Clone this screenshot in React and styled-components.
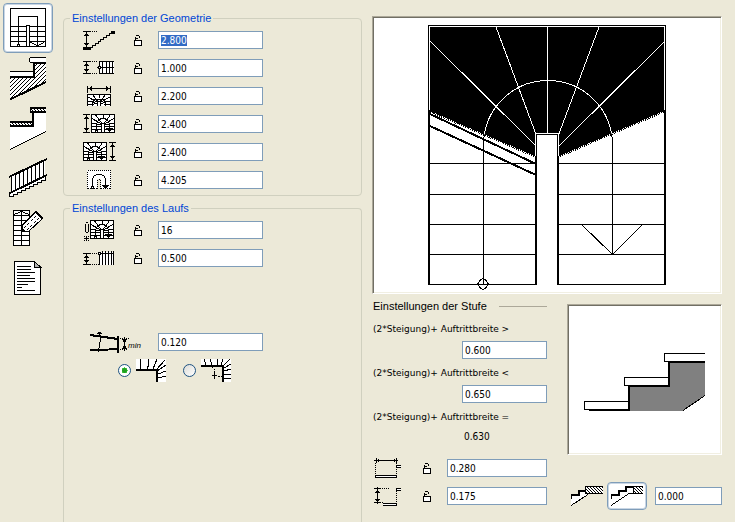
import React, { useEffect, useRef } from 'react';
import styled, { createGlobalStyle } from 'styled-components';

const GlobalStyle = createGlobalStyle`
  * {
    box-sizing: border-box;
  }
  body {
    margin: 0;
    background: #ece9d8;
    color: #000;
    font-family: 'DejaVu Sans Condensed', 'DejaVu Sans', sans-serif;
    font-stretch: condensed;
    font-size: 10px;
    line-height: 14px;
  }
  ::selection {
    background: rgba(49, 106, 197, 0.996);
    color: #fff;
  }
`

const Page = styled.div`
  display: grid;
  grid-template-columns: 63px 299px minmax(350px, 1fr);
  min-height: 100vh;
  padding-right: 13px;
`

const Toolbar = styled.nav`
  display: flex;
  flex-direction: column;
  padding: 3px;
`

const ToolButton = styled.button`
  display: flex;
  align-items: center;
  justify-content: center;
  width: ${props => props.$small ? '40px' : '50px'};
  height: ${props => props.$small ? '28px' : '50px'};
  padding: 0;
  border: 1px solid ${props => props.$active ? '#7f9db9' : 'transparent'};
  border-radius: 4px;
  background: ${props => props.$active ? '#fff' : 'transparent'};
  box-shadow: ${props => props.$active ? 'inset 0 0 0 1px #c9d6e4' : 'none'};
`

const Drawing = styled.svg`
  display: block;
  flex: none;
  fill: none;
  stroke: #000;
  stroke-width: 1;
  shape-rendering: crispEdges;
`

const Settings = styled.main`
  display: flex;
  flex-direction: column;
  gap: 5px;
  padding-top: 11px;
`

const Group = styled.fieldset`
  min-width: 0;
  margin: 0;
  padding: 1px 8px;
  border: 1px solid #d0d0bf;
  border-radius: 4px;
  ${props => props.$open && `
    flex: 1;
    border-bottom: 0;
    border-radius: 4px 4px 0 0;
  `}
`

const GroupTitle = styled.legend`
  height: 14px;
  margin-left: -2px;
  padding: 0 2px;
  color: #0046d5;
  font-family: 'Liberation Sans', sans-serif;
  font-stretch: normal;
  font-size: 11px;
`

const Row = styled.div`
  display: grid;
  grid-template-columns: ${props => props.$step ? '43px' : '54px'} 24px auto;
  align-items: center;
  justify-content: start;
  height: 28px;
  margin-top: ${props => props.$apart ? '56px' : '0'};
`

const RowIcon = styled.label`
  display: flex;
  justify-content: ${props => props.$align || 'center'};
  grid-column: span ${props => props.$wide ? 2 : 1};
  padding: 0 ${props => props.$wide ? '6px' : '0'};
`

const LockButton = styled.button`
  display: flex;
  justify-content: center;
  padding: 0;
  border: 0;
  background: none;
`

const NumberInput = styled.input`
  width: ${props => props.$width || 105}px;
  height: 18px;
  margin-left: ${props => props.$inset ? '8px' : '0'};
  padding: 0 2px;
  border: 1px solid #7f9db9;
  border-radius: 0;
  outline: none;
  background: #fff;
  color: #000;
  font: inherit;
`

const RadioRow = styled.div`
  display: flex;
  align-items: center;
  gap: 17px;
  height: 28px;
  padding-left: 46px;
`

const RadioOption = styled.label`
  display: flex;
  align-items: center;
  gap: 5px;
`

const Radio = styled.input`
  appearance: none;
  width: 13px;
  height: 13px;
  margin: 0;
  border: 1px solid #1d5281;
  border-radius: 50%;
  background: linear-gradient(135deg, #dcdcd7, #fff);
  &:checked {
    background: radial-gradient(circle, #21a121 0 2px, #55d551 3px, #fff 3px);
  }
`

const Preview = styled.aside`
  display: flex;
  flex-direction: column;
  gap: 1px;
  padding: 16px 0 12px 10px;
`

const Canvas = styled.div`
  display: flex;
  align-items: center;
  justify-content: center;
  height: ${props => props.$height}px;
  border: 1px solid;
  border-color: #aca899 #fff #fff #aca899;
  background: #fff;
  box-shadow: inset 1px 1px #716f64, inset -1px -1px #f1efe2;
`

const StepArea = styled.div`
  display: grid;
  grid-template-columns: 175px 1fr;
  gap: 20px;
`

const StepTitle = styled.h2`
  display: flex;
  align-items: center;
  gap: 12px;
  height: 22px;
  margin: 0;
  padding-left: 1px;
  font-family: 'Liberation Sans', sans-serif;
  font-stretch: normal;
  font-size: 11px;
  font-weight: normal;
  white-space: nowrap;
  &::after {
    content: '';
    flex: 1;
    height: 1px;
    background: #aca899;
  }
`

const StepLabel = styled.label`
  display: block;
  height: 22px;
  padding-left: 1px;
  font-family: 'DejaVu Sans', sans-serif;
  font-stretch: normal;
  font-size: 9px;
  line-height: 24px;
  white-space: nowrap;
`

const StepValue = styled.div`
  display: flex;
  align-items: center;
  justify-content: flex-end;
  height: 22px;
`

const StepResult = styled.output`
  display: block;
  height: 20px;
  margin-bottom: 7px;
  padding-left: 92px;
  line-height: 20px;
`

const StepPreview = styled.section`
  display: flex;
  flex-direction: column;
  justify-content: space-between;
  padding-top: 9px;
`

const Footer = styled.div`
  display: flex;
  align-items: center;
  justify-content: space-between;
  height: 28px;
`

const ExitButtons = styled.div`
  display: flex;
`

/* ---- toolbar drawings ---- */

const PlanIcon = () => (
  <Drawing width="36" height="40" viewBox="0 0 36 40">
    <path d="M.5 .5H35.5V38.5H.5ZM8.5 38V8.5H27.5V37" />
    <path d="M0 18.5H16M0 23.5H16M0 28.5H16M0 33.5H16M20 18.5H36M20 23.5H36M20 28.5H36M20 33.5H36" />
    <path d="M16.5 38V17.5H19.5V38" fill="#fff" />
    <path d="M20.5 34.5L27.5 37.5L34.5 34.5" />
    <rect x="7.5" y="36.5" width="2" height="2" fill="#fff" />
  </Drawing>
)

const SolidStairIcon = () => (
  <Drawing width="38" height="45" viewBox="9 55 38 45">
    <defs>
      <pattern id="hatch" width="4" height="4" patternUnits="userSpaceOnUse">
        <rect width="4" height="4" fill="#fff" stroke="none" />
        <path d="M3 0h1v1h-1zM2 1h1v1h-1zM1 2h1v1h-1zM0 3h1v1h-1z" fill="#000" stroke="none" />
      </pattern>
    </defs>
    <path d="M10 77H34V63H46V81L10 99Z" fill="url(#hatch)" stroke="none" />
    <path d="M46 56.5H30.5L29.5 57.5V60.5L30.5 61.5H46" fill="#fff" />
    <path d="M10 70.5H33V75H10" fill="#fff" />
    <path d="M10 76H34V62H46" strokeWidth="2" />
    <path d="M10 98.5L46 81" strokeWidth="2" />
  </Drawing>
)

const CoveredStairIcon = () => (
  <Drawing width="38" height="45" viewBox="9 106 38 45">
    <defs>
      <pattern id="tread" width="3" height="3" patternUnits="userSpaceOnUse">
        <rect width="3" height="3" fill="#fff" stroke="none" />
        <path d="M0 0h1v1h-1zM1 1h1v1h-1zM2 2h1v1h-1z" fill="#000" stroke="none" />
      </pattern>
    </defs>
    <path d="M10 127H33V113H46V132L10 149Z" fill="#fff" stroke="none" />
    <path d="M46 107.5H30.5V111H46" fill="url(#tread)" />
    <path d="M46 108H30V112H46" />
    <path d="M10 121.5H33V126H10" fill="url(#tread)" />
    <path d="M10 126H33V112H46M10 122H32" strokeWidth="2" />
    <path d="M10 149.5L46 131.5" />
  </Drawing>
)

const RailingIcon = () => (
  <Drawing width="38" height="42" viewBox="9 157 38 42">
    <path d="M11 177L45 160V176L11 192Z" fill="#fff" stroke="none" />
    <path d="M9 194V196.5H13.5V194.5H17.5V192.5H21.5V190.5H25.5V188.5H29.5V186.5H33.5V184.5H37.5V182.5H41.5V180.5H45.5V177" fill="#fff" />
    <path d="M9 177L47 159M9 193.5L47 175" strokeWidth="2" />
    <path d="M11.5 176V192M15.5 174V190M19.5 172V188M23.5 170V186M27.5 168V184M31.5 166V182M35.5 164V180M39.5 162V179M43.5 160V177" />
  </Drawing>
)

const EditStairIcon = () => (
  <Drawing width="31" height="38" viewBox="14 208 31 38">
    <path d="M14.5 209.5H30.5V244.5H14.5Z" fill="#fff" />
    <path d="M22.5 209V245M14 214.5H31M14 219.5H31M14 224.5H31M14 229.5H31M14 234.5H31M14 239.5H31M15 213.5L22.5 210.5L30 213.5" />
    <path d="M23 224.5L37 210.5L43.5 217.5L29.5 230.5H23Z" fill="#fff" />
    <path d="M25 227L39 213M28 229L41 216" strokeDasharray="1 1" />
    <path d="M23 227V230H26Z" fill="#000" />
    <path d="M36.5 210.5L43.5 217.5" strokeWidth="2" />
  </Drawing>
)

const DocumentIcon = () => (
  <Drawing width="28" height="36" viewBox="14 260 28 36">
    <path d="M14.5 261.5H34.5L40.5 267.5V294.5H14.5Z" fill="#fff" />
    <path d="M34.5 261V267.5H41L34.5 261.5" fill="#b4b4b4" />
    <path d="M17 266.5H31M17 269.5H31M17 272.5H35M17 275.5H30M17 278.5H35M17 281.5H35M17 284.5H28M17 287.5H22M17 290.5H35" />
  </Drawing>
)

/* ---- row drawings ---- */

const LockIcon = () => (
  <Drawing width="8" height="11" viewBox="0 0 8 11">
    <path d="M.5 5.5H7.5V10.5H.5Z" fill="#fff" />
    <path d="M1.5 5V1.5M2 .5H5M5.5 1V3M1 3.5H4" />
  </Drawing>
)

const VerticalSize = ({ x, top, bottom }) => (
  <g>
    <path d={`M${x - 3} ${top + .5}H${x + 4}M${x - 3} ${bottom + .5}H${x + 4}M${x + .5} ${top}V${bottom}`} />
    <path
      d={`M${x - 1} ${top + 3}h3v1h-3zM${x - 2} ${top + 4}h5v1h-5zM${x - 1} ${bottom - 3}h3v1h-3zM${x - 2} ${bottom - 4}h5v1h-5z`}
      fill="#000"
      stroke="none"
    />
  </g>
)

const WindingStair = ({ x }) => (
  <g transform={`translate(${x} 2)`}>
    <rect x=".5" y=".5" width="23" height="18" fill="#fff" />
    <path d="M10.5 19V9.5H13.5V19" />
    <path d="M0 9.5H3L10 11M24 9.5H21L14 11M0 4L10 9.5M24 4L14 9.5M4 0L10.5 9M20 0L13.5 9M12 0V5" />
    <path d="M0 12.5H10M0 15.5H10M14 12.5H24M14 15.5H24" />
    <path d="M5.5 18V9.5L7.5 6.5L10 4.5H14L16.5 6.5L18.5 9.5V15" />
    <path d="M15 14H22L18.5 18Z" fill="#000" stroke="none" />
    <rect x="4.5" y="16.5" width="2" height="2" fill="#fff" />
  </g>
)

const HeightIcon = () => (
  <Drawing width="36" height="24" viewBox="0 0 36 24">
    <VerticalSize x={5} top={3} bottom={19} />
    <path d="M9 3.5H17" strokeDasharray="1 1" />
    <path d="M2 19h8v3h-8zM30 3h4v3h-4z" fill="#000" stroke="none" />
    <path d="M9 19.5H11.5V17.5H14.5V15.5H17.5V13.5H19.5V11.5H22.5V9.5H25.5V7.5H28.5V5.5H31" />
  </Drawing>
)

const WidthIcon = () => (
  <Drawing width="36" height="24" viewBox="0 0 36 24">
    <VerticalSize x={5} top={5} bottom={17} />
    <path d="M9 5.5H17M9 17.5H17" strokeDasharray="1 1" />
    <path d="M18 5H33V18H18Z" fill="#fff" stroke="none" />
    <path d="M18 5.5H33M18 17.5H33M16 11.5H33M18.5 5V18M21.5 5V18M25.5 5V18M28.5 5V18M31.5 5V18" />
    <rect x="17.5" y="10.5" width="2" height="2" fill="#fff" />
  </Drawing>
)

const TotalWidthIcon = () => (
  <Drawing width="36" height="24" viewBox="0 0 36 24">
    <path d="M6 4.5H30M6.5 2V8M29.5 2V8" />
    <path d="M8 4h1v1h-1zM9 3h1v3h-1zM10 2h1v5h-1zM27 4h1v1h-1zM26 3h1v3h-1zM25 2h1v5h-1z" fill="#000" stroke="none" />
    <path d="M6.5 8V11M29.5 8V11" strokeDasharray="1 1" />
    <path d="M6 10H30V22H6Z" fill="#fff" stroke="none" />
    <path d="M6.5 22V10.5H29.5V22M16.5 22V17.5H19.5V22" />
    <path d="M7 13L16 18M29 13L20 18M11 10L16.5 17M25 10L19.5 17M18 10V14M6 17.5H10L16 20M30 17.5H26L20 20M7 20.5H13M23 20.5H29M11.5 22V18L14 15H22L24.5 18V22" />
  </Drawing>
)

const LeftLengthIcon = () => (
  <Drawing width="36" height="24" viewBox="0 0 36 24">
    <VerticalSize x={5} top={2} bottom={20} />
    <WindingStair x={10} />
  </Drawing>
)

const RightLengthIcon = () => (
  <Drawing width="36" height="24" viewBox="0 0 36 24">
    <WindingStair x={2} />
    <VerticalSize x={31} top={2} bottom={20} />
  </Drawing>
)

const WalkLineIcon = () => (
  <Drawing width="36" height="24" viewBox="0 0 36 24">
    <path d="M6 2H30V21H20V11H16V21H6Z" fill="#fff" stroke="none" />
    <path d="M6.5 20.5V2.5H29.5V20.5M19.5 20.5V11.5H16.5V20.5M6.5 20.5H16M20 20.5H29.5" strokeDasharray="1 1" />
    <path d="M11.5 19V11.5L12.5 8.5L15.5 6.5H20.5L23.5 8.5L24.5 11.5V18" />
    <path d="M21 17H28L24.5 21Z" fill="#000" stroke="none" />
    <rect x="10.5" y="18.5" width="2" height="2" fill="#fff" />
  </Drawing>
)

const StepCountIcon = () => (
  <Drawing width="36" height="24" viewBox="0 0 36 24">
    <path d="M5 4.5H7M4.5 6V14M7.5 6V14M5 14.5H7" />
    <path d="M5.5 18V23M3 20.5H8" />
    <path d="M3 18h1v1h-1zM7 18h1v1h-1zM3 22h1v1h-1zM7 22h1v1h-1z" fill="#000" stroke="none" />
    <WindingStair x={9} />
  </Drawing>
)

const OffsetIcon = () => (
  <Drawing width="36" height="24" viewBox="0 0 36 24">
    <VerticalSize x={5} top={7} bottom={18} />
    <path d="M9 7.5H17M9 18.5H18" strokeDasharray="1 1" />
    <path d="M19 6H33V19H19Z" fill="#fff" stroke="none" />
    <path d="M18 7.5H33M18.5 7V19M21.5 5V19M24.5 5V19M27.5 5V19M30.5 5V19M32.5 5V19" />
    <rect x="17.5" y="6.5" width="2" height="2" fill="#fff" />
  </Drawing>
)

const MinTreadText = styled.text`
  fill: #000;
  stroke: none;
  font-family: 'Liberation Sans', sans-serif;
  font-size: 8px;
  font-style: italic;
`

const MinTreadIcon = () => (
  <Drawing width="54" height="24" viewBox="0 0 54 24">
    <path d="M0 5L28 9M0 20.5L28 19" strokeWidth="2" />
    <path d="M28 6V23" strokeWidth="2" />
    <path d="M9.5 2L10.5 9L9.5 16L8 22M7 3.5H12M8 2.5H11" />
    <path d="M30 8.5H40M30 19.5H38" strokeDasharray="1 1" />
    <path d="M34.5 7V21M32 9.5H37M32 18.5H37" />
    <path d="M33 10h3v2h-3zM33 16h3v2h-3z" fill="#000" stroke="none" />
    <MinTreadText x="38" y="18">min</MinTreadText>
  </Drawing>
)

const CornerFanIcon = () => (
  <Drawing width="30" height="23" viewBox="0 0 30 23">
    <path d="M0 0H30V23H20V11H0Z" fill="#fff" stroke="none" />
    <path d="M0 11H21V23" strokeWidth="2" />
    <path d="M4 0L5 10M12.5 0V5L11.5 10M21 0L17 10M29 1L20 11M30 6L21 12M30 12L22 15M30 17L22 19" />
  </Drawing>
)

const PointFanIcon = () => (
  <Drawing width="30" height="23" viewBox="0 0 30 23">
    <path d="M0 0H30V23H21V7H0Z" fill="#fff" stroke="none" />
    <path d="M0 7H22V23" strokeWidth="2" />
    <path d="M3 0L5 6M9 0L11 6M16 0V6M22 0L20 6M29 0L22 7M30 5L23 9M30 10L23 12M30 15L23 16M30 19H23" />
    <path d="M11 7L13.5 11V20M17 17.5H21" strokeDasharray="2 1" />
    <path d="M11 16.5H16M13.5 14V19" />
  </Drawing>
)

const TreadDepthIcon = () => (
  <Drawing width="30" height="24" viewBox="0 0 30 24">
    <path d="M2 4.5H26M4.5 2V7M24.5 2V7" />
    <path d="M5 4h1v1h-1zM6 3h1v3h-1zM23 4h1v1h-1zM22 3h1v3h-1z" fill="#000" stroke="none" />
    <path d="M3.5 7V18M24.5 7V19" strokeDasharray="1 1" />
    <path d="M3.5 19.5H24.5V21.5H3.5Z" fill="#fff" />
    <path d="M29 9.5H24.5V11.5H29" fill="#fff" />
  </Drawing>
)

const RiserHeightIcon = () => (
  <Drawing width="30" height="24" viewBox="0 0 30 24">
    <path d="M2 4.5H8M2 18.5H8M5.5 3V20" />
    <path d="M4 7h3v1h-3zM3 8h5v1h-5zM4 16h3v1h-3zM3 15h5v1h-5z" fill="#000" stroke="none" />
    <path d="M8 4.5H18M8 18.5H12M24.5 7V19" strokeDasharray="1 1" />
    <path d="M11 19.5H24.5V21.5H11" fill="#fff" />
    <path d="M29 4.5H24.5V6.5H29" fill="#fff" />
  </Drawing>
)

const FloorHatch = ({ id }) => (
  <defs>
    <pattern id={id} width="3" height="3" patternUnits="userSpaceOnUse">
      <rect width="3" height="3" fill="#fff" stroke="none" />
      <path d="M0 0h1v1h-1zM1 1h1v1h-1zM2 2h1v1h-1z" fill="#000" stroke="none" />
    </pattern>
  </defs>
)

const ExitBelowIcon = () => (
  <Drawing width="32" height="20" viewBox="0 0 32 20">
    <FloorHatch id="floor-below" />
    <path d="M0 9H7V5H14V8H17L0 19Z" fill="#fff" stroke="none" />
    <path d="M0 9H7.5V5H14" strokeWidth="2" />
    <path d="M.5 9V13M0 19.5L17 8.5" />
    <path d="M32 .5H14.5V7.5H32" fill="url(#floor-below)" />
  </Drawing>
)

const ExitFlushIcon = () => (
  <Drawing width="32" height="20" viewBox="0 0 32 20">
    <FloorHatch id="floor-flush" />
    <path d="M0 9H7.5V5H14.5V1H24" strokeWidth="2" />
    <path d="M.5 9V13M0 19.5L18 7.5H23" />
    <path d="M32 .5H22.5V7.5H32" fill="url(#floor-flush)" />
  </Drawing>
)

/* ---- large drawings ---- */

const turnOutline = 'M430 27H664V111L559 156V133H535V156L430 111Z'
const walkLine = 'M483.5 284V145A64.5 64.5 0 0 1 612.5 145V254'

const PlanDrawing = () => (
  <Drawing width="240" height="270" viewBox="427 20 240 270" role="img" aria-label="Grundriss">
    <defs>
      <clipPath id="turn">
        <path d={turnOutline} />
      </clipPath>
    </defs>
    <path d="M428.5 285V25.5H665.5V285" />
    <path d="M429 110V285M536 155V285M558 155V285M665 110V285" strokeWidth="2" />
    <path d={turnOutline} fill="#000" stroke="none" />
    <path d="M430 111.5L535 156.5M664 111.5L559 156.5" strokeDasharray="1 1" strokeWidth="2" />
    <path d="M430 163.5H536M430 194.5H536M430 224.5H536M430 254.5H536M428 284.5H537" />
    <path d="M558 163.5H664M558 194.5H664M558 224.5H664M558 254.5H664M557 284.5H666" />
    <path d="M430 114L536 164M430 126L536 175" strokeWidth="2" />
    <path d={walkLine} />
    <path d="M582 225L612.5 254.5L642 225" />
    <g stroke="#fff" clipPath="url(#turn)">
      <path d={walkLine} />
      <path d="M430 41L535 145M496 27L535.5 133M547.5 27V133M599 27L558.5 135M664 42L559 146" />
    </g>
    <path d="M535.5 156V133.5H558.5V156M429.5 110V26.5H664.5V110" stroke="#fff" />
    <path d="M536.5 156V134.5H557.5V156" />
    <path d="M480.5 279.5L483 278.5L485.5 279.5L486.5 281.5L488.5 284L486.5 286.5L485.5 288.5L483 289.5L480.5 288.5L479.5 286.5L477.5 284L479.5 281.5Z" />
  </Drawing>
)

const StepDrawing = () => (
  <Drawing width="151" height="147" viewBox="569 306 151 147" role="img" aria-label="Stufen">
    <path d="M629 386H669V362H705V395L682 411H629Z" fill="#808080" stroke="none" />
    <path d="M584.5 401.5H628.5V409.5H584.5ZM624.5 377.5H668.5V385.5H624.5ZM705 353.5H664.5V361.5H705" fill="#fff" />
    <path d="M589 410H629V386H669V362H705" strokeWidth="2" />
    <path d="M683 410.5L705 395.5" />
  </Drawing>
)

/* ---- panels ---- */

const ValueRow = ({ id, label, icon, value, locked = true, apart, inputRef }) => (
  <Row $apart={apart}>
    <RowIcon htmlFor={id} aria-label={label} $wide={!locked} $align={locked ? 'center' : 'flex-end'}>{icon}</RowIcon>
    {locked && <LockButton type="button" aria-label={`${label} sperren`}><LockIcon /></LockButton>}
    <NumberInput id={id} ref={inputRef} defaultValue={value} $inset />
  </Row>
)

const StepRow = ({ id, label, icon, value }) => (
  <Row $step>
    <RowIcon htmlFor={id} aria-label={label} $align="flex-start">{icon}</RowIcon>
    <LockButton type="button" aria-label={`${label} sperren`}><LockIcon /></LockButton>
    <NumberInput id={id} defaultValue={value} $width={100} $inset />
  </Row>
)

const tools = [
  { name: 'Grundriss', icon: <PlanIcon /> },
  { name: 'Massivtreppe', icon: <SolidStairIcon /> },
  { name: 'Belag', icon: <CoveredStairIcon /> },
  { name: 'Geländer', icon: <RailingIcon /> },
  { name: 'Darstellung', icon: <EditStairIcon /> },
  { name: 'Attribute', icon: <DocumentIcon /> },
]

const geometry = [
  { id: 'height', label: 'Höhe', icon: <HeightIcon />, value: '2.800' },
  { id: 'width', label: 'Laufbreite', icon: <WidthIcon />, value: '1.000' },
  { id: 'total', label: 'Gesamtbreite', icon: <TotalWidthIcon />, value: '2.200' },
  { id: 'left', label: 'Länge links', icon: <LeftLengthIcon />, value: '2.400' },
  { id: 'right', label: 'Länge rechts', icon: <RightLengthIcon />, value: '2.400' },
  { id: 'line', label: 'Lauflinie', icon: <WalkLineIcon />, value: '4.205' },
]

const App = () => {
  const firstInput = useRef(null)

  useEffect(() => {
    firstInput.current.focus()
    firstInput.current.select()
  }, [])

  return (
    <Page>
      <GlobalStyle />
      <Toolbar>
        {tools.map((tool, i) => (
          <ToolButton key={tool.name} type="button" aria-label={tool.name} $active={i === 0}>{tool.icon}</ToolButton>
        ))}
      </Toolbar>

      <Settings>
        <Group>
          <GroupTitle>Einstellungen der Geometrie</GroupTitle>
          {geometry.map((row, i) => (
            <ValueRow key={row.id} {...row} inputRef={i === 0 ? firstInput : null} />
          ))}
        </Group>
        <Group $open>
          <GroupTitle>Einstellungen des Laufs</GroupTitle>
          <ValueRow id="count" label="Anzahl Stufen" icon={<StepCountIcon />} value="16" />
          <ValueRow id="offset" label="Abstand Lauflinie" icon={<OffsetIcon />} value="0.500" />
          <ValueRow id="min" label="Minimaler Auftritt" icon={<MinTreadIcon />} value="0.120" locked={false} apart />
          <RadioRow>
            <RadioOption>
              <Radio type="radio" name="corner" aria-label="Ecke verziehen" defaultChecked />
              <CornerFanIcon />
            </RadioOption>
            <RadioOption>
              <Radio type="radio" name="corner" aria-label="Punkt verziehen" />
              <PointFanIcon />
            </RadioOption>
          </RadioRow>
        </Group>
      </Settings>

      <Preview>
        <Canvas $height={278}><PlanDrawing /></Canvas>
        <StepArea>
          <section>
            <StepTitle>Einstellungen der Stufe</StepTitle>
            <StepLabel htmlFor="rule-min">(2*Steigung)+ Auftrittbreite &gt;</StepLabel>
            <StepValue><NumberInput id="rule-min" defaultValue="0.600" $width={85} /></StepValue>
            <StepLabel htmlFor="rule-max">(2*Steigung)+ Auftrittbreite &lt;</StepLabel>
            <StepValue><NumberInput id="rule-max" defaultValue="0.650" $width={85} /></StepValue>
            <StepLabel htmlFor="rule">(2*Steigung)+ Auftrittbreite =</StepLabel>
            <StepResult id="rule">0.630</StepResult>
            <StepRow id="depth" label="Auftritt" icon={<TreadDepthIcon />} value="0.280" />
            <StepRow id="rise" label="Steigung" icon={<RiserHeightIcon />} value="0.175" />
          </section>
          <StepPreview>
            <Canvas $height={151}><StepDrawing /></Canvas>
            <Footer>
              <ExitButtons>
                <ToolButton type="button" aria-label="Austritt unter Decke" $small><ExitBelowIcon /></ToolButton>
                <ToolButton type="button" aria-label="Austritt bündig" $small $active><ExitFlushIcon /></ToolButton>
              </ExitButtons>
              <NumberInput aria-label="Austrittshöhe" defaultValue="0.000" $width={67} />
            </Footer>
          </StepPreview>
        </StepArea>
      </Preview>
    </Page>
  )
}

export default App;
